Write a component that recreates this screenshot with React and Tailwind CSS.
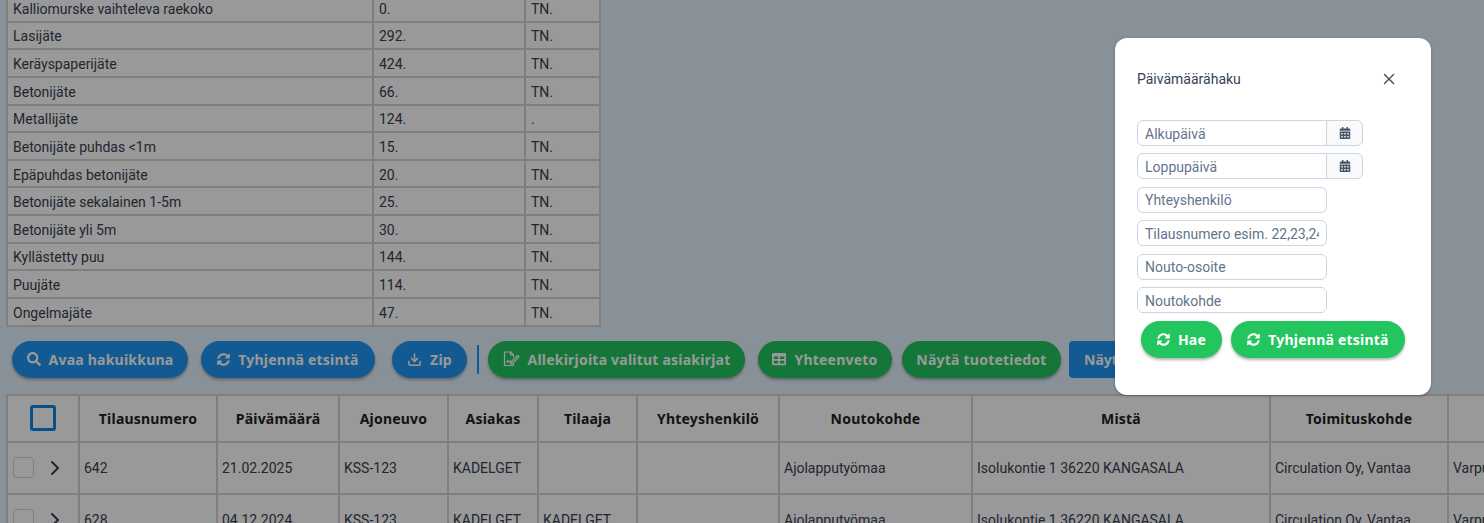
import React from "react";
import { FaSearch, FaSyncAlt, FaTable, FaCalendarAlt } from "react-icons/fa";
import { LuChevronRight, LuDownload, LuX } from "react-icons/lu";

const WASTE_ROWS = [
  ["Kalliomurske vaihteleva raekoko", "0.", "TN."],
  ["Lasijäte", "292.", "TN."],
  ["Keräyspaperijäte", "424.", "TN."],
  ["Betonijäte", "66.", "TN."],
  ["Metallijäte", "124.", "."],
  ["Betonijäte puhdas <1m", "15.", "TN."],
  ["Epäpuhdas betonijäte", "20.", "TN."],
  ["Betonijäte sekalainen 1-5m", "25.", "TN."],
  ["Betonijäte yli 5m", "30.", "TN."],
  ["Kyllästetty puu", "144.", "TN."],
  ["Puujäte", "114.", "TN."],
  ["Ongelmajäte", "47.", "TN."],
];

const COLUMNS = [
  ["Tilausnumero", "w-[138px]"],
  ["Päivämäärä", "w-[122px]"],
  ["Ajoneuvo", "w-[109px]"],
  ["Asiakas", "w-[90px]"],
  ["Tilaaja", "w-[99px]"],
  ["Yhteyshenkilö", "w-[142px]"],
  ["Noutokohde", "w-[193px]"],
  ["Mistä", "w-[298px]"],
  ["Toimituskohde", "w-[178px]"],
  ["", "w-[200px]"],
];

const ORDERS = [
  ["642", "21.02.2025", "KSS-123", "KADELGET", "", "", "Ajolapputyömaa", "Isolukontie 1 36220 KANGASALA", "Circulation Oy, Vantaa", "Varpunen"],
  ["628", "04.12.2024", "KSS-123", "KADELGET", "KADELGET", "", "Ajolapputyömaa", "Isolukontie 1 36220 KANGASALA", "Circulation Oy, Vantaa", "Varpunen"],
];

const SignIcon = () => (
  <svg width="17" height="16" viewBox="0 0 17 16" fill="none" stroke="currentColor" strokeWidth="1.2" strokeLinejoin="round" strokeLinecap="round">
    <path d="M10.5 13v1.500h-9V1h6l3 3v2" />
    <path d="M7.500 1v3h3" />
    <path d="M3.500 11.500l1.500-2 1 1.500 1.500-1" />
    <path d="M8 11l6.500-6.500 1.500 1.500L9.500 12.500l-2 .5z" />
  </svg>
);

const ToolbarButton = ({ icon, children, color = "bg-[#2196f3]", extra = "" }) => (
  <button className={`flex h-[37px] shrink-0 items-center justify-center gap-[8px] rounded-full font-['Noto_Sans',sans-serif] text-[14px] font-bold tracking-[0.22px] whitespace-nowrap text-white shadow-[0_2px_3px_rgba(0,0,0,0.3)] ${color} ${extra}`}>
    {icon}
    {children}
  </button>
);

const Field = ({ placeholder, calendar }) => (
  <div className="flex h-[26px]">
    <input
      placeholder={placeholder}
      className={`h-full w-[190px] border border-[#cbd5e1] bg-white px-[7px] pt-[1px] text-[14px] text-[#334155] outline-none placeholder:text-[#64748b] ${calendar ? "rounded-l-[6px]" : "rounded-[6px]"}`}
    />
    {calendar && (
      <div className="-ml-px flex w-[37px] items-center justify-center rounded-r-[6px] border border-[#cbd5e1] bg-[#f8fafc] text-[#475569]">
        <FaCalendarAlt size={12} />
      </div>
    )}
  </div>
);

const App = () => {
  return (
    <div className="relative h-[523px] w-[1484px] overflow-hidden bg-[#e5f2fd] font-['Roboto',sans-serif] text-[#374151]">
      <div className="-mt-[7px] ml-[6px]">
        <table className="w-[593px] table-fixed border-collapse bg-white text-[14px]">
          <colgroup>
            <col className="w-[366px]" />
            <col className="w-[152px]" />
            <col className="w-[75px]" />
          </colgroup>
          <tbody>
            {WASTE_ROWS.map((row) => (
              <tr key={row[0]} className="h-[27.64px]">
                {row.map((cell, i) => (
                  <td key={i} className="border-2 border-[#d4d4d4] px-[5px] pt-[2px] pb-0 leading-none">{cell}</td>
                ))}
              </tr>
            ))}
          </tbody>
        </table>
      </div>

      <div className="mt-[14px] flex items-center pl-[12px]">
        <ToolbarButton extra="w-[176px]" icon={<FaSearch size={14} />}>Avaa hakuikkuna</ToolbarButton>
        <ToolbarButton extra="ml-[13px] w-[174px]" icon={<FaSyncAlt size={13} />}>Tyhjennä etsintä</ToolbarButton>
        <ToolbarButton extra="ml-[17px] w-[75px]" icon={<LuDownload size={15} strokeWidth={2.4} />}>Zip</ToolbarButton>
        <div className="mr-[9px] ml-[10px] h-[29px] w-[2px] bg-[#2196f3]" />
        <ToolbarButton extra="w-[257px]" color="bg-[#22c55e]" icon={<SignIcon />}>Allekirjoita valitut asiakirjat</ToolbarButton>
        <ToolbarButton extra="ml-[13px] w-[134px]" color="bg-[#22c55e]" icon={<FaTable size={14} />}>Yhteenveto</ToolbarButton>
        <ToolbarButton extra="ml-[10px] w-[159px]" color="bg-[#22c55e]">Näytä tuotetiedot</ToolbarButton>
        <button className="ml-[8px] h-[37px] shrink-0 rounded-[4px] bg-[#2196f3] px-[15px] font-['Noto_Sans',sans-serif] text-[14px] font-bold whitespace-nowrap text-white">Näytä tiedot</button>
      </div>

      <div className="mt-[16px] ml-[6px] w-[1641px]">
        <table className="w-[1641px] table-fixed border-collapse bg-white text-[14px]">
          <thead>
            <tr className="h-[47px]">
              <th className="w-[72px] border-2 border-[#d4d4d4]">
                <span className="mx-auto block size-[26px] rounded-[3px] border-[3px] border-[#0b87e6]" />
              </th>
              {COLUMNS.map(([label, width]) => (
                <th key={label || "extra"} className={`border-2 border-[#d4d4d4] font-['Noto_Sans',sans-serif] font-bold tracking-[0.2px] text-[#222] ${width}`}>{label}</th>
              ))}
            </tr>
          </thead>
          <tbody>
            {ORDERS.map((row) => (
              <tr key={row[0]} className="h-[52px]">
                <td className="border-2 border-[#d4d4d4]">
                  <div className="flex items-center pl-[5px]">
                    <span className="size-[21px] rounded-[4px] border border-[#cbd5e1]" />
                    <LuChevronRight size={24} className="ml-[9px] text-[#334155]" />
                  </div>
                </td>
                {row.map((cell, i) => (
                  <td key={i} className="border-2 border-[#d4d4d4] px-[4px] pt-[2px] whitespace-nowrap">{cell}</td>
                ))}
              </tr>
            ))}
          </tbody>
        </table>
      </div>

      {/* modal mask */}
      <div className="absolute inset-0 bg-black/40" />
      <div className="absolute top-[38px] left-[1115px] flex h-[357px] w-[316px] flex-col rounded-[12px] bg-white pt-[30px] pl-[22px] shadow-[0_1px_3px_rgba(0,0,0,0.3)]">
        <div className="flex h-[21px] items-center justify-between pr-[33px]">
          <span className="pt-[2px] text-[14px] text-[#334155]">Päivämäärähaku</span>
          <LuX size={18} className="text-[#475569]" />
        </div>
        <div className="mt-[31px] flex flex-col gap-[7.45px]">
          <Field placeholder="Alkupäivä" calendar />
          <Field placeholder="Loppupäivä" calendar />
          <Field placeholder="Yhteyshenkilö" />
          <Field placeholder="Tilausnumero esim. 22,23,24" />
          <Field placeholder="Nouto-osoite" />
          <Field placeholder="Noutokohde" />
        </div>
        <div className="mt-[8px] ml-[4px] flex gap-[9px]">
          <ToolbarButton extra="w-[81px]" color="bg-[#22c55e]" icon={<FaSyncAlt size={13} />}>Hae</ToolbarButton>
          <ToolbarButton extra="w-[174px]" color="bg-[#22c55e]" icon={<FaSyncAlt size={13} />}>Tyhjennä etsintä</ToolbarButton>
        </div>
      </div>
    </div>
  );
};

export default App;
